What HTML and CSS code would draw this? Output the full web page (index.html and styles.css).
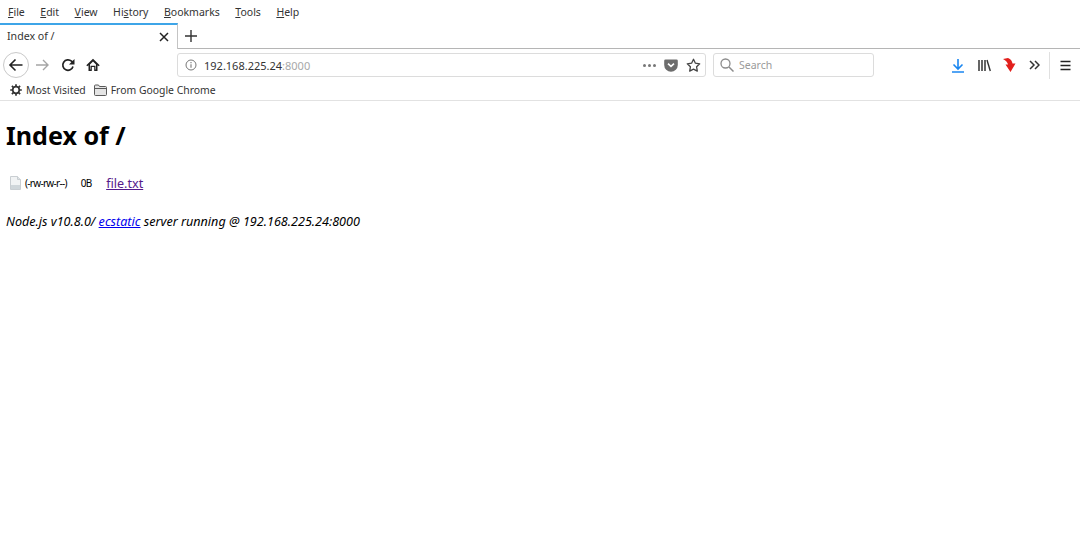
FILE: index.html
```html
<!DOCTYPE html>
<html lang="en">
<head>
<meta charset="utf-8">
<title>Index of /</title>
<link rel="stylesheet" href="styles.css">
</head>
<body>
<header class="chrome">
  <nav class="menubar">
    <span><u>F</u>ile</span><span><u>E</u>dit</span><span><u>V</u>iew</span><span>Hi<u>s</u>tory</span><span><u>B</u>ookmarks</span><span><u>T</u>ools</span><span><u>H</u>elp</span>
  </nav>
  <div class="tabbar">
    <div class="tab">
      <span class="tab-title">Index of /</span>
      <svg class="tab-close" width="10" height="10" viewBox="0 0 10 10"><path d="M1 1l8 8M9 1l-8 8" stroke="#222" stroke-width="1.5" fill="none"/></svg>
    </div>
    <svg class="new-tab" width="12" height="12" viewBox="0 0 12 12"><path d="M6 0v12M0 6h12" stroke="#333" stroke-width="1.4" fill="none"/></svg>
  </div>
  <div class="navbar">
    <div class="nav-buttons">
      <span class="back">
        <svg width="16" height="16" viewBox="0 0 16 16"><path d="M14.5 8H2M7.500 2.500L2 8l5.500 5.500" stroke="#222" stroke-width="1.6" fill="none"/></svg>
      </span>
      <svg class="forward" width="15" height="14" viewBox="0 0 15 14"><path d="M1 7h12M8 2l5 5-5 5" stroke="#a5a5a5" stroke-width="1.400" fill="none"/></svg>
      <svg class="reload" width="14" height="14" viewBox="0 0 14 14"><path d="M12 8.500A5.200 5.200 0 1 1 10.500 3.200L12.500 5" stroke="#222" stroke-width="1.700" fill="none"/><path d="M13.500 1v5.500H8z" fill="#222"/></svg>
      <svg class="home" width="14" height="14" viewBox="0 0 14 14"><path d="M7 .8L.3 7.300l1 1L2.500 7.200V13h3.300V9h2.400v4h3.300V7.200l1.200 1.100 1-1z" fill="#222"/><path d="M7 3.600L4 6.400v5.100h.5V7.800h5v3.700h.5V6.400z" fill="#fff"/></svg>
    </div>
    <div class="urlbar">
      <svg class="info" width="12" height="12" viewBox="0 0 12 12"><circle cx="6" cy="6" r="5" stroke="#777" fill="none"/><path d="M6 5.200v3.600M6 3v1.200" stroke="#777" stroke-width="1.100"/></svg>
      <span class="url">192.168.225.24<span class="port">:8000</span></span>
      <span class="url-dots"><i></i><i></i><i></i></span>
      <svg class="pocket" width="14" height="13" viewBox="0 0 14 13"><path d="M1.500 .5h11A1.300 1.300 0 0 1 13.800 1.800V6A6.800 6.800 0 0 1 .2 6V1.800A1.300 1.300 0 0 1 1.500 .5z" fill="#6d6d6d"/><path d="M4 4.600l3 2.800 3-2.800" stroke="#fff" stroke-width="1.600" fill="none"/></svg>
      <svg class="star" width="15" height="15" viewBox="0 0 15 15"><path d="M7.500 1.300l1.900 3.900 4.300.6-3.100 3 .7 4.300-3.800-2-3.800 2 .7-4.300-3.100-3 4.300-.6z" stroke="#444" stroke-width="1.300" fill="none" stroke-linejoin="round"/></svg>
    </div>
    <div class="searchbar">
      <svg width="14" height="14" viewBox="0 0 14 14"><circle cx="5.500" cy="5.500" r="4.500" stroke="#8c8c8c" stroke-width="1.300" fill="none"/><path d="M9 9l4.500 4.500" stroke="#8c8c8c" stroke-width="1.500"/></svg>
      <span>Search</span>
    </div>
    <div class="tools">
      <svg class="tool-download" width="14" height="15" viewBox="0 0 14 15"><path d="M7 1v9.500M2.500 6.500L7 11l4.500-4.500" stroke="#1a86f0" stroke-width="1.600" fill="none"/><path d="M1 14h12" stroke="#1a86f0" stroke-width="1.500"/></svg>
      <svg class="tool-library" width="13" height="13" viewBox="0 0 13 13"><path d="M1 1v11M4 1v11M7 1v11" stroke="#333" stroke-width="1.500" fill="none"/><path d="M9 1l3.300 11" stroke="#333" stroke-width="1.400"/></svg>
      <svg class="tool-ext" width="13" height="14" viewBox="0 0 13 14"><path d="M0 1L5 0C8 1 9 3 9.500 5.500L12.500 5.500 7.500 14 2.500 6.500 5 6.500C4.500 4.500 3 2.500 0 1z" fill="#e2201c"/></svg>
      <svg class="tool-more" width="11" height="10" viewBox="0 0 11 10"><path d="M1 1l4 4-4 4M6 1l4 4-4 4" stroke="#333" stroke-width="1.500" fill="none"/></svg>
      <span class="tool-sep"></span>
      <svg class="tool-menu" width="11" height="11" viewBox="0 0 11 11"><path d="M.500 1.500h10M.500 5.500h10M.500 9.500h10" stroke="#222" stroke-width="1.500"/></svg>
    </div>
  </div>
  <div class="bookmarks">
    <span class="bookmark">
      <svg width="12" height="12" viewBox="0 0 12 12"><circle cx="6" cy="6" r="3.300" stroke="#333" stroke-width="1.700" fill="none"/><path d="M6 .2v2.300M6 9.500v2.300M.2 6h2.300M9.500 6h2.300M1.900 1.900l1.700 1.700M8.400 8.400l1.700 1.700M1.900 10.100l1.700-1.700M8.400 3.600l1.700-1.700" stroke="#333" stroke-width="1.700"/></svg>
      Most Visited
    </span>
    <span class="bookmark">
      <svg width="13" height="12" viewBox="0 0 13 12"><path d="M.5 10.500V2A1 1 0 0 1 1.500 1h3l1 1.500h6a1 1 0 0 1 1 1v7a1 1 0 0 1-1 1h-10a1 1 0 0 1-1-1z" fill="#e4e4e4" stroke="#5a5a5a"/><path d="M.8 4.500h11.500" stroke="#5a5a5a"/></svg>
      From Google Chrome
    </span>
  </div>
</header>
<main class="page">
  <h1>Index of /</h1>
  <div class="listing">
    <svg class="file-icon" width="11" height="14" viewBox="0 0 11 14"><path d="M.5.500h7l3 3v10H.5z" fill="#f1f3f4" stroke="#c9ced2"/><path d="M7.500.5v3h3" fill="#dfe3e6" stroke="#c9ced2"/><path d="M1 9h9v4H1z" fill="#cfd6da"/></svg>
    <span class="perm">(-rw-rw-r--)</span>
    <span class="size">0B</span>
    <a class="file-link" href="#file">file.txt</a>
  </div>
  <address>Node.js v10.8.0/ <a href="#ecstatic">ecstatic</a> server running @ 192.168.225.24:8000</address>
</main>
</body>
</html>
```
FILE: styles.css
```css
html, body { margin: 0; padding: 0; background: #fff; }
body { font-family: "Noto Sans", sans-serif; color: #000; height: 546px; overflow: hidden; }
svg { display: block; flex: none; }

.chrome { color: #222; font-size: 12px; }

.menubar { display: flex; height: 23px; align-items: center; padding-left: 8px; gap: 15.500px; font-size: 10.500px; color: #333; }
.menubar u { text-underline-offset: 1px; }

.tabbar { display: flex; height: 26px; box-sizing: border-box; border-bottom: 1px solid #b5b5b5; align-items: center; }
.tab { width: 178px; height: 26px; box-sizing: border-box; border-top: 2px solid #3da5e8; border-right: 1px solid #c4c4c4; background: #fff; display: flex; align-items: center; justify-content: space-between; padding: 0 9px 2px 7px; font-size: 10.600px; color: #333; }
.tab-close { margin-top: 2px; margin-right: -1px; }
.new-tab { margin-left: 7px; }

.navbar { display: flex; height: 30px; box-sizing: content-box; align-items: center; padding-top: 1px; margin-bottom: -1px; }
.nav-buttons { display: flex; align-items: center; width: 175px; padding-left: 3px; box-sizing: border-box; }
.back { width: 26px; height: 26px; box-sizing: border-box; border: 1px solid #c9c9c9; border-radius: 50%; display: flex; align-items: center; justify-content: center; }
.forward { margin-left: 6px; }
.reload { margin-left: 11px; }
.home { margin-left: 11px; }

.urlbar { width: 529px; height: 24px; box-sizing: border-box; border: 1px solid #dcdcdc; border-radius: 3px; display: flex; align-items: center; padding: 0 4px 0 7px; margin-left: 2px; font-size: 11px; }
.url { margin-left: 7px; color: #333; flex: 1; }
.port { color: #a8a8a8; }
.url-dots { display: flex; gap: 2px; }
.url-dots i { width: 3px; height: 3px; border-radius: 50%; background: #777; }
.pocket { margin-left: 8px; }
.star { margin-left: 8px; }

.searchbar { width: 161px; height: 24px; box-sizing: border-box; border: 1px solid #dcdcdc; border-radius: 3px; display: flex; align-items: center; gap: 5px; padding-left: 6px; margin-left: 7px; font-size: 10.500px; color: #9a9a9a; }

.tools { flex: 1; display: flex; align-items: center; padding-left: 77px; }
.tool-library { margin-left: 13px; }
.tool-ext { margin-left: 12px; }
.tool-more { margin-left: 13px; }
.tool-sep { width: 1px; height: 27px; background: #e0e0e0; margin-left: 9px; }
.tool-menu { margin-left: 10px; }

.bookmarks { display: flex; height: 22px; box-sizing: border-box; align-items: center; border-bottom: 1px solid #e2e2e2; padding-left: 10px; gap: 8px; font-size: 10.400px; color: #333; }
.bookmark { display: flex; align-items: center; gap: 4px; }

.page { padding-left: 6px; }
h1 { margin: 18px 0 0; font-size: 25.100px; line-height: 33px; font-weight: 700; color: #000; }
.listing { display: flex; align-items: center; height: 20px; margin-top: 21px; padding-left: 4px; }
.perm { font-size: 10px; margin-left: 4px; color: #000; letter-spacing: -.7px; }
.size { font-size: 10px; margin-left: 14px; color: #000; letter-spacing: -.7px; }
.file-link { font-size: 12.600px; margin-left: 14.500px; color: #551a8b; }
address { margin-top: 20px; font-size: 12.600px; line-height: 18px; font-style: italic; color: #000; }
address a { color: #0000ee; }
```
